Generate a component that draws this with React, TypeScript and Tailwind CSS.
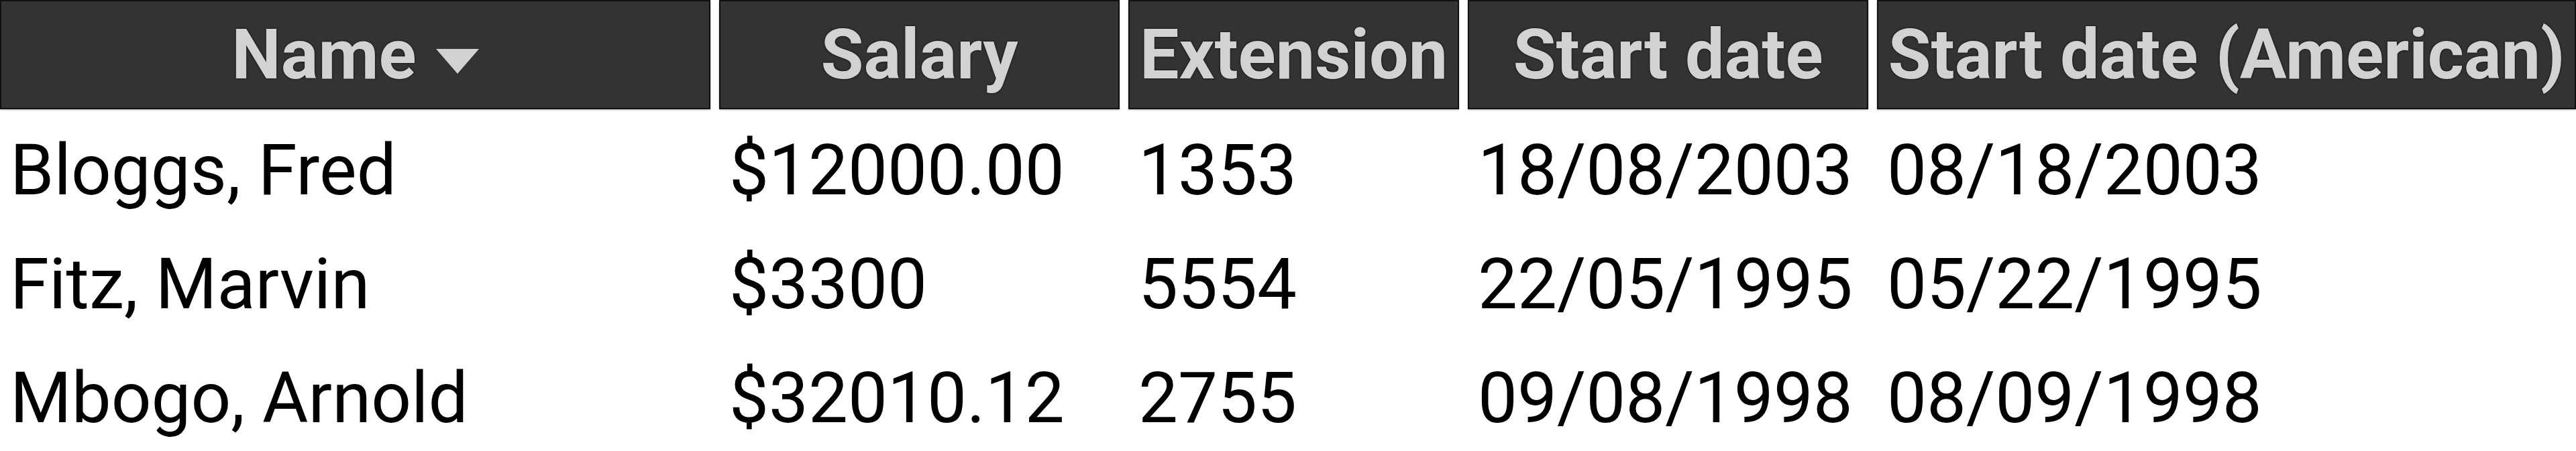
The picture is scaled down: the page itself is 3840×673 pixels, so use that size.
const columns = ["Name", "Salary", "Extension", "Start date", "Start date (American)"];

const rows = [
  ["Bloggs, Fred", "$12000.00", "1353", "18/08/2003", "08/18/2003"],
  ["Fitz, Marvin", "$3300", "5554", "22/05/1995", "05/22/1995"],
  ["Mbogo, Arnold", "$32010.12", "2755", "09/08/1998", "08/09/1998"],
];

function SortArrow() {
  return (
    <svg width="64" height="37" viewBox="0 0 64 37" className="mt-[20px] shrink-0">
      <polygon points="0,0 64,0 32,37" fill="#d2d2d2" />
    </svg>
  );
}

function HeaderCell({ label, sorted }: { label: string; sorted?: boolean }) {
  return (
    <div className="flex h-[163px] items-center justify-center gap-[29px] overflow-hidden border-2 border-[#111] bg-[#333] shadow-[0_1px_2px_rgba(0,0,0,0.35)]">
      <span className="whitespace-nowrap text-[104px] font-bold leading-[122px] text-[#d2d2d2] [text-shadow:0_0_3px_#000]">
        {label}
      </span>
      {sorted && <SortArrow />}
    </div>
  );
}

export default function App() {
  return (
    <div className="min-h-[673px] overflow-hidden bg-white [font-family:Roboto,sans-serif]">
      <div className="grid grid-cols-[1059px_597px_493px_597px_1fr] gap-x-[13px] gap-y-[13px]">
        {columns.map((c, i) => (
          <HeaderCell key={c} label={c} sorted={i === 0} />
        ))}
        {rows.map((r) =>
          r.map((cell, j) => (
            <div
              key={r[0] + j}
              className="whitespace-nowrap pb-[17px] pl-[15px] pt-[18px] text-[105px] leading-[122px] text-black"
            >
              {cell}
            </div>
          ))
        )}
      </div>
    </div>
  );
}
